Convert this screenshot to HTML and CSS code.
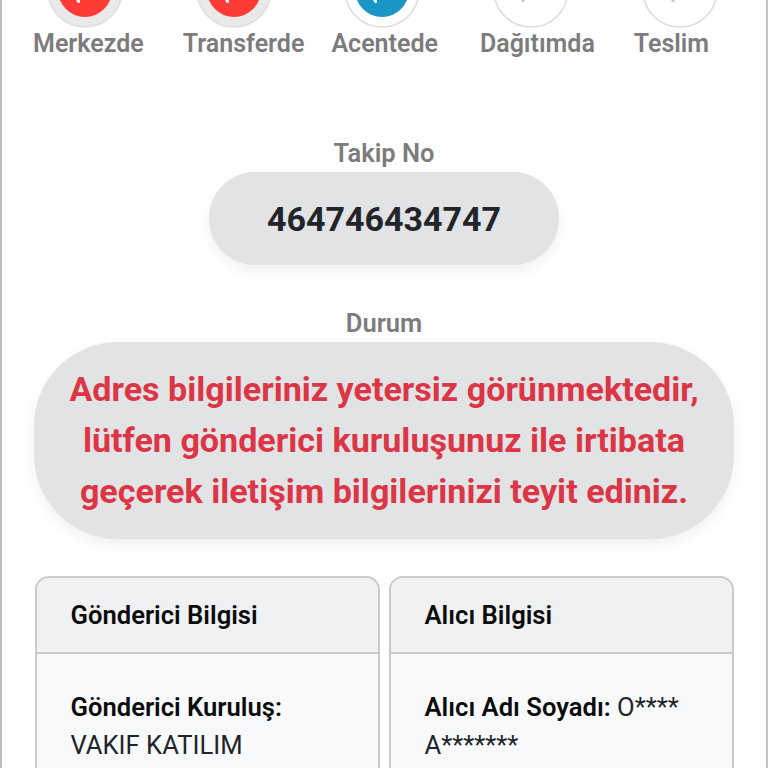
FILE: index.html
```html
<!DOCTYPE html>
<html lang="tr">
<head>
<meta charset="utf-8">
<title>Kargo Takip</title>
<link rel="stylesheet" href="styles.css">
</head>
<body>
<main class="frame">
  <section class="steps">
    <div class="rings">
      <svg class="ring" viewBox="0 0 76 76"><circle class="halo halo-done" cx="38" cy="38" r="37"/><circle class="core-red" cx="38" cy="38" r="27"/><path class="tick-white" d="M30 46l1.500 3.500"/></svg>
      <svg class="ring" viewBox="0 0 76 76"><circle class="halo halo-done" cx="38" cy="38" r="37"/><circle class="core-red" cx="38" cy="38" r="27"/><path class="tick-white" d="M30 46l1.500 3.500"/></svg>
      <svg class="ring" viewBox="0 0 76 76"><circle class="halo halo-line" cx="38" cy="38" r="37"/><circle class="core-blue" cx="38" cy="38" r="27"/><path class="tick-white" d="M30 46l1.500 3.500"/></svg>
      <svg class="ring" viewBox="0 0 76 76"><circle class="halo halo-line" cx="38" cy="38" r="37"/><path class="tick-gray" d="M29 46l1 2.500"/></svg>
      <svg class="ring" viewBox="0 0 76 76"><circle class="halo halo-line" cx="38" cy="38" r="37"/><path class="tick-gray" d="M30 46l1 2.500"/></svg>
    </div>
    <div class="step-labels">
      <span class="step-label">Merkezde</span>
      <span class="step-label">Transferde</span>
      <span class="step-label">Acentede</span>
      <span class="step-label">Dağıtımda</span>
      <span class="step-label">Teslim</span>
    </div>
  </section>

  <section class="tracking">
    <h2 class="caption">Takip No</h2>
    <div class="pill pill-number">464746434747</div>
  </section>

  <section class="status">
    <h2 class="caption">Durum</h2>
    <div class="pill pill-status">Adres bilgileriniz yetersiz görünmektedir,<br>lütfen gönderici kuruluşunuz ile irtibata<br>geçerek iletişim bilgilerinizi teyit ediniz.</div>
  </section>

  <section class="cards">
    <article class="card">
      <header class="card-head">Gönderici Bilgisi</header>
      <div class="card-body">
        <p class="field"><strong>Gönderici Kuruluş:</strong><br>VAKIF KATILIM</p>
      </div>
    </article>
    <article class="card">
      <header class="card-head">Alıcı Bilgisi</header>
      <div class="card-body">
        <p class="field"><strong>Alıcı Adı Soyadı:</strong> O**** A*******</p>
      </div>
    </article>
  </section>
</main>
</body>
</html>
```
FILE: styles.css
```css
* { box-sizing: border-box; }
html, body { margin: 0; height: 768px; overflow: hidden; background: #fff; }
body { font-family: Roboto, "Liberation Sans", sans-serif; color: #212529; }
.frame {
  width: 768px;
  height: 768px;
  overflow: hidden;
  border-left: 2px solid #bdbdbd;
  border-right: 2px solid #c4c4c4;
  padding: 0 33px;
}
.steps { margin: -48px -33px 0; }
.rings {
  display: grid;
  grid-template-columns: repeat(5, 148.75px);
  padding-left: 8.6px;
}
.ring { display: block; width: 76px; height: 76px; margin: 0 auto; }
.halo { stroke-width: 1.5; }
.halo-done { fill: #e9e9e9; stroke: #dedede; }
.halo-line { fill: #fff; stroke: #dcdcdc; }
.core-red { fill: #ff3b36; }
.core-blue { fill: #1a96c4; }
.tick-white, .tick-gray { fill: none; stroke-width: 3; stroke-linecap: round; }
.tick-white { stroke: #fff; }
.tick-gray { stroke: #c4c4c4; }
.step-labels { display: flex; padding-left: 31px; height: 32px; }
.step-label { font-size: 25px; line-height: 32px; font-weight: 600; color: #7c7c7c; white-space: nowrap; margin-right: 39px; }
.step-label:nth-child(2) { margin-right: 27px; }
.step-label:nth-child(3) { margin-right: 42px; }
.step-label:nth-child(4) { margin-right: 39px; }
.tracking, .status { display: flex; flex-direction: column; align-items: center; }
.tracking { margin-top: 78px; }
.status { margin-top: 43px; }
.caption { margin: 0 0 4px; font-size: 25.5px; line-height: 30px; font-weight: 600; color: #7c7c7c; }
.pill {
  background: #e2e3e5;
  box-shadow: 0 6px 14px rgba(0, 0, 0, 0.06);
  text-align: center;
  font-weight: 700;
}
.pill-number {
  flex: none;
  width: 350px;
  height: 93px;
  border-radius: 46px;
  display: flex;
  align-items: center;
  justify-content: center;
  font-size: 34px;
}
.pill-status {
  flex: none;
  width: 700px;
  height: 197px;
  border-radius: 84px;
  padding-top: 22px;
  font-size: 34.1px;
  line-height: 51px;
  color: #dc3545;
}
.cards {
  display: grid;
  grid-template-columns: 345px 345px;
  gap: 9px;
  margin: 37px -0.5px 0;
}
.card {
  height: 260px;
  background: #f8f9fb;
  border: 2px solid #c9cacc;
  border-radius: 14px;
  overflow: hidden;
}
.card-head {
  height: 76px;
  padding: 0 34px;
  display: flex;
  align-items: center;
  background: #f0f1f3;
  border-bottom: 2px solid #c9cacc;
  font-size: 25.6px;
  font-weight: 600;
  color: #0c0c0c;
}
.card-body { padding: 34px 34px 0; }
.field { margin: 0; font-size: 25.6px; line-height: 38px; color: #212529; }
.field strong { font-weight: 600; color: #0c0c0c; }
```
